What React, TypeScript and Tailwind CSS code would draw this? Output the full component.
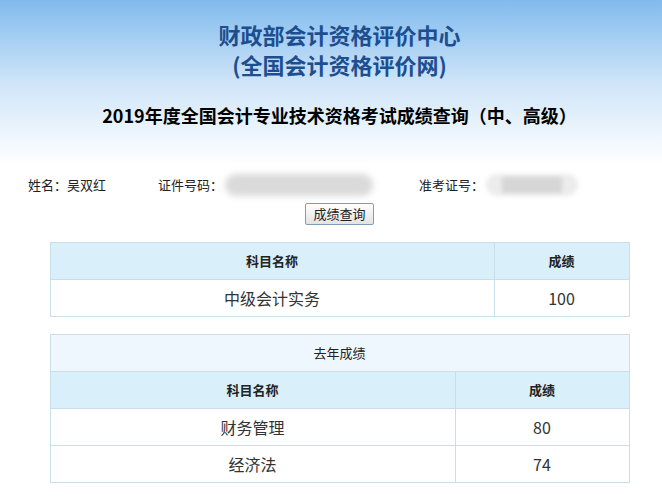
const font = { fontFamily: '"Noto Sans CJK SC", "Liberation Sans", sans-serif' };

type Row = { name: string; score: string };

function ScoreTable({
  rows,
  caption,
  firstCol,
}: {
  rows: Row[];
  caption?: string;
  firstCol: string;
}) {
  return (
    <table className="w-[580px] border-collapse border border-[#c8dfe9] text-[#222]">
      <tbody>
        {caption && (
          <tr className="h-[37px] bg-[#eef7fd]">
            <td colSpan={2} className="border border-[#c8dfe9] text-center text-[13px]">
              {caption}
            </td>
          </tr>
        )}
        <tr className="h-[37px] bg-[#d9effa]">
          <td className={`${firstCol} border border-[#c8dfe9] text-center text-[13px] font-bold`}>
            科目名称
          </td>
          <td className="border border-[#c8dfe9] text-center text-[13px] font-bold">成绩</td>
        </tr>
        {rows.map((r) => (
          <tr key={r.name} className="h-[37px] bg-white">
            <td className="border border-[#c8dfe9] text-center text-[16px] text-[#333]">{r.name}</td>
            <td className="border border-[#c8dfe9] text-center text-[16px] text-[#333]">{r.score}</td>
          </tr>
        ))}
      </tbody>
    </table>
  );
}

export default function App() {
  return (
    <div className="min-h-[501px] w-full overflow-hidden bg-white" style={font}>
      <div className="h-[165px] bg-gradient-to-b from-[#80baed] via-[#cfe5f8] to-white pl-[17px] pt-[19px] text-center">
        <div className="text-[22px] leading-[30px] font-bold text-[#1d4e8f]">财政部会计资格评价中心</div>
        <div className="text-[22px] leading-[30px] font-bold text-[#1d4e8f]">(全国会计资格评价网)</div>
        <div className="mt-[24px] text-[18px] leading-[24px] font-bold text-black">
          2019年度全国会计专业技术资格考试成绩查询（中、高级）
        </div>
      </div>

      <div className="mt-[10px] flex h-[20px] items-center pl-[28px] text-[13px] leading-[20px] text-[#222]">
        <span className="w-[130px]">姓名：吴双红</span>
        <span>证件号码：</span>
        <div className="ml-[2px] h-[22px] w-[148px] rounded-full bg-[#dadada] blur-[3px]" />
        <span className="ml-[46px]">准考证号：</span>
        <div className="ml-[2px] flex h-[22px] w-[92px] items-center justify-center rounded-full bg-[#ececec] blur-[2px]">
          <div className="h-[16px] w-[60px] bg-[#d6d6d6]" />
        </div>
      </div>

      <div className="mt-[8px] flex justify-center pl-[17px]">
        <button className="h-[22px] w-[69px] rounded-[2px] border border-[#7f9db9] bg-gradient-to-b from-white to-[#e3e3e3] text-[13px] leading-[20px] text-[#222]">
          成绩查询
        </button>
      </div>

      <div className="mt-[17px] flex flex-col items-center gap-[17px] pl-[17px]">
        <ScoreTable firstCol="w-[444px]" rows={[{ name: '中级会计实务', score: '100' }]} />
        <ScoreTable
          caption="去年成绩"
          firstCol="w-[405px]"
          rows={[
            { name: '财务管理', score: '80' },
            { name: '经济法', score: '74' },
          ]}
        />
      </div>
    </div>
  );
}
